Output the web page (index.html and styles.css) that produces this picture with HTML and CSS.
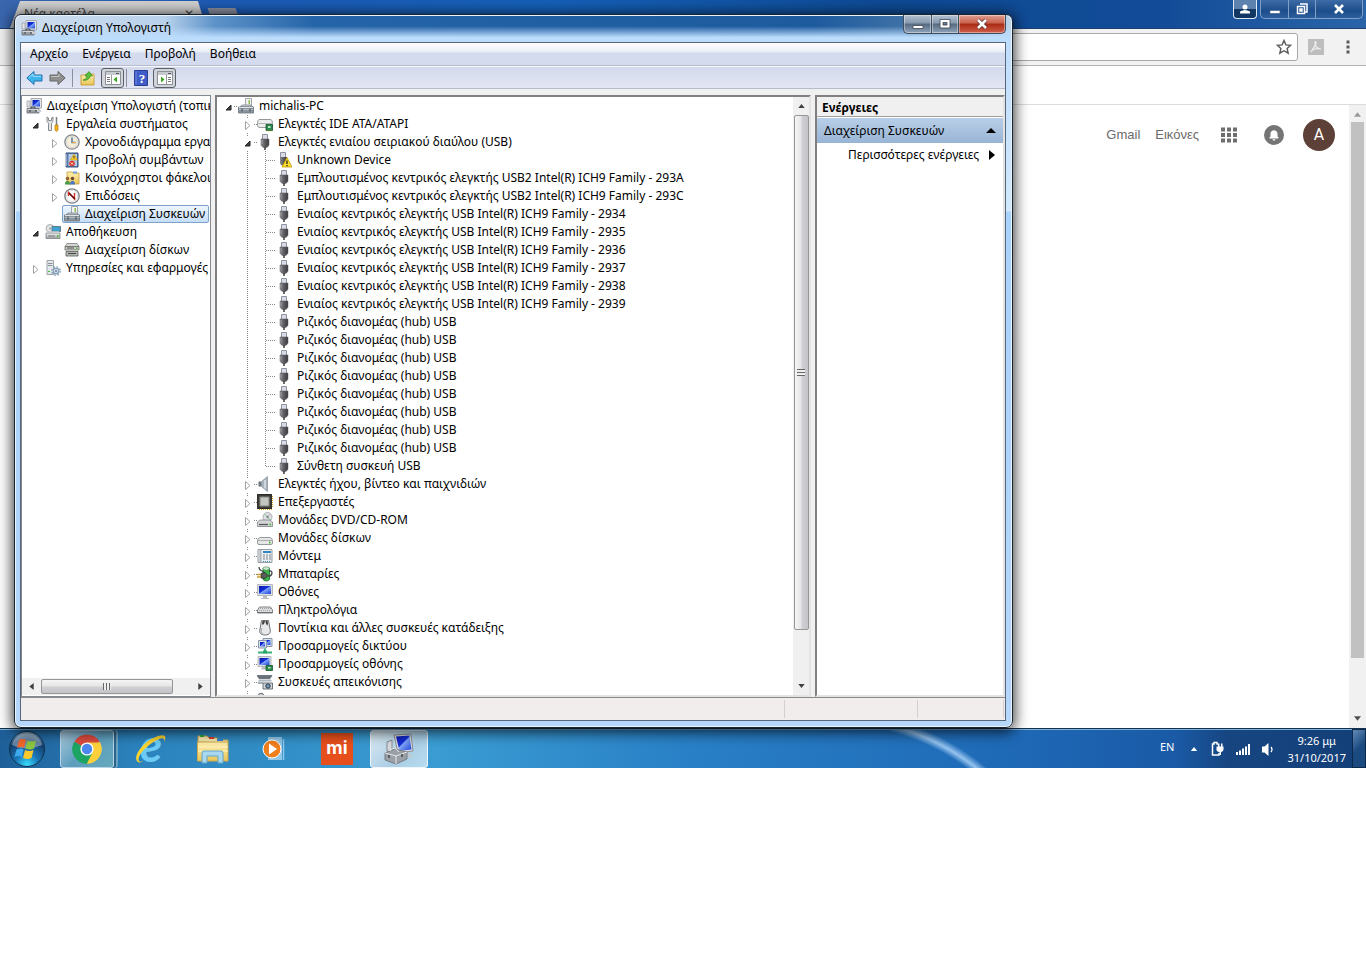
FILE: index.html
```html
<!DOCTYPE html>
<html lang="el">
<head>
  <meta charset="UTF-8" />
  <meta name="viewport" content="width=device-width, initial-scale=1.0" />
  <title>Διαχείριση Υπολογιστή</title>
  <link rel="stylesheet" href="styles.css">
</head>
<body>
  <!-- icon sprite -->
  <svg class="sprite" width="0" height="0" aria-hidden="true">
    <defs>
      <linearGradient id="gBlue" x1="0" y1="0" x2="1" y2="1"><stop offset="0" stop-color="#0a17a8"/><stop offset=".45" stop-color="#1430dc"/><stop offset=".5" stop-color="#7fa4f8"/><stop offset="1" stop-color="#1b3fd6"/></linearGradient>
      <linearGradient id="gGrey" x1="0" y1="0" x2="0" y2="1"><stop offset="0" stop-color="#f4f5f6"/><stop offset="1" stop-color="#9a9ea2"/></linearGradient>
      <linearGradient id="gDark" x1="0" y1="0" x2="1" y2="0"><stop offset="0" stop-color="#8b8b8f"/><stop offset=".5" stop-color="#5c5c60"/><stop offset="1" stop-color="#3c3c40"/></linearGradient>
      <linearGradient id="gGold" x1="0" y1="0" x2="0" y2="1"><stop offset="0" stop-color="#fff0b0"/><stop offset="1" stop-color="#e9c558"/></linearGradient>
      <radialGradient id="gOrb" cx=".5" cy=".95" r=".95"><stop offset="0" stop-color="#37e0ff"/><stop offset=".35" stop-color="#1b77b8"/><stop offset=".75" stop-color="#123d6b"/><stop offset="1" stop-color="#8fb3cd"/></radialGradient>
    </defs>
    <symbol id="i-computer" viewBox="0 0 16 16">
      <path d="M5 .5h10.500v9.500H5z" fill="#e4e6e8" stroke="#a6aaaf"/><path d="M6.500 2h7.500v6.500H6.500z" fill="url(#gBlue)"/>
      <path d="M1 3h3v6H1z" fill="#e2e4e6" stroke="#95999e" stroke-width=".7"/>
      <path d="M1 10.500h12V15H1z" fill="#9aa0a6" stroke="#676d74" stroke-width=".8"/><path d="M5 10.500V9h4v1.500M4 12v2M10 12v2" stroke="#3c4248" fill="none"/><path d="M1.500 11.500h11" stroke="#d4d8db"/>
      <path d="M11 12h4v2h-4z" fill="#c9cdd1"/>
    </symbol>
    <symbol id="i-tools" viewBox="0 0 16 16">
      <path d="M2 1v3.500c0 2 1.500 2 1.500 3V14.500h3V7.500c0-1 1.500-1 1.500-3V1L6.500 2v2.500h-3V2z" fill="#e4e5e7" stroke="#7b7f84" stroke-width=".9"/>
      <path d="M11.500 1v8" stroke="#7b7f84" stroke-width="1.500"/><path d="M10 9h3v5l-1.500 1.500L10 14z" fill="#f3b21c" stroke="#b97a06" stroke-width=".7"/>
    </symbol>
    <symbol id="i-clock" viewBox="0 0 16 16">
      <circle cx="8" cy="8" r="7.200" fill="#f1f1ee" stroke="#85898d" stroke-width="1.300"/><circle cx="8" cy="8" r="5.500" fill="#f6efdc" stroke="#c5c5c0" stroke-width=".6"/>
      <path d="M8 3.500v5h3.500" fill="none" stroke="#4a6c9a" stroke-width="1.400"/><path d="M8 8.500h4" stroke="#e0a54a"/>
    </symbol>
    <symbol id="i-events" viewBox="0 0 16 16">
      <path d="M2 1h12v14H2z" fill="#5779ad" stroke="#35527f"/><path d="M4.500 2H13v12H4.500z" fill="#b9cbe4"/><path d="M1 3h2M1 5h2M1 7h2M1 9h2M1 11h2M1 13h2" stroke="#dfe3e8"/>
      <path d="M10 2l3.500 6h-7z" fill="#ffd42a" stroke="#b98b00" stroke-width=".6"/><path d="M10 4v2.500" stroke="#333"/>
      <circle cx="8" cy="11.500" r="2.800" fill="#d8352a"/><path d="M7 10.500l2 2m0-2l-2 2" stroke="#fff" stroke-width=".9"/>
    </symbol>
    <symbol id="i-shared" viewBox="0 0 16 16">
      <path d="M3 2h5l1 1h6v11H3z" fill="url(#gGold)" stroke="#c79b35" stroke-width=".8"/><path d="M9 1.500h4v2H9z" fill="#6fa4dd"/>
      <circle cx="3.500" cy="8.500" r="1.700" fill="#8f5b30"/><path d="M.8 14.500c0-5 5.400-5 5.400 0z" fill="#4d9b4a"/><circle cx="8.500" cy="8.500" r="1.700" fill="#6b432a"/><path d="M6 14.500c0-5 5-5 5 0z" fill="#4a78c6"/>
    </symbol>
    <symbol id="i-perf" viewBox="0 0 16 16">
      <circle cx="8" cy="8" r="7.200" fill="#fff" stroke="#777b80" stroke-width="1.300"/><circle cx="8" cy="8" r="5.600" fill="#fff" stroke="#c9c9c9" stroke-width=".6"/>
      <path d="M4.500 8V4.500l6 6.500V5" fill="none" stroke="#d52a20" stroke-width="1.400"/><path d="M5 5l6 6" stroke="#5c0d09" stroke-width="1.200"/>
    </symbol>
    <symbol id="i-devices" viewBox="0 0 16 16">
      <path d="M7.500.5h6V8h-6z" fill="#f2f3f4" stroke="#8d9298" stroke-width=".8"/><path d="M10.500 2H12v4h-1.500z" fill="#8fbb4e"/>
      <path d="M2 9l2-2h9l2 2z" fill="#c9ced3" stroke="#737a81" stroke-width=".7"/><path d="M.5 9h15v6H.5z" fill="#8b959e" stroke="#68727b" stroke-width=".8"/><path d="M1 11.500h14" stroke="#b2bac1"/><path d="M4 10.500v3M12 10.500v3" stroke="#3b444c"/><path d="M1 9.500h14" stroke="#dfe4e8"/>
    </symbol>
    <symbol id="i-storage" viewBox="0 0 16 16">
      <circle cx="5" cy="4.500" r="4" fill="#e2e4e5" stroke="#9a9da0" stroke-width=".8"/><circle cx="5" cy="4.500" r="1" fill="#9a9da0"/><path d="M7 2.500h8.500v5H7z" fill="#3ba3d0" stroke="#5c6f7a" stroke-width=".9"/>
      <path d="M1 9h14v5.500H1z" fill="url(#gGrey)" stroke="#7c8083" stroke-width=".8"/><path d="M3 12h7" stroke="#777"/><path d="M12 11h1.500v2H12z" fill="#43c02e"/><path d="M2 8h12" stroke="#c9cccf" stroke-width="1.500"/>
    </symbol>
    <symbol id="i-diskmgmt" viewBox="0 0 16 16">
      <path d="M3 1.500h10l2 3H1z" fill="#d5d7d5" stroke="#7a7d78" stroke-width=".8"/><path d="M1 4.500h14V8H1z" fill="#c8cac6" stroke="#686b66" stroke-width=".8"/><path d="M3 6h7" stroke="#555"/><path d="M12 5.500h1.500V7H12z" fill="#43c02e"/>
      <path d="M2 9.500h12V14H2z" fill="#b4b6b1" stroke="#5b5e58" stroke-width=".8"/><path d="M4 11.500h8" stroke="#444"/>
    </symbol>
    <symbol id="i-services" viewBox="0 0 16 16">
      <path d="M2 .5h6.500v14H2z" fill="#e4e8ea" stroke="#929ca4" stroke-width=".9"/><path d="M3 3.500h4.500M3 5.500h4.500" stroke="#88929a"/><path d="M3 11h2v1H3z" fill="#43c02e"/>
      <circle cx="11" cy="11" r="2.800" fill="#dfe9f2" stroke="#8ba3ba" stroke-width="1.400"/><circle cx="11" cy="11" r="4.200" fill="none" stroke="#8ba3ba" stroke-width="1.400" stroke-dasharray="1.700 1.600"/><circle cx="11" cy="11" r="1" fill="#5b7691"/>
    </symbol>
    <symbol id="i-ide" viewBox="0 0 16 16">
      <path d="M2 3.500h12q1.500 1 1.500 4v3q-1 1-2.500 1H3q-2.500 0-2.500-2v-3q0-2 1.500-3z" fill="#eceeee" stroke="#8b8f91" stroke-width=".9"/><path d="M.5 7.500h15" stroke="#b4b7b8"/>
      <path d="M9 8.500h6.500v6H9z" fill="#2d8a4f" stroke="#15552c" stroke-width=".8"/><path d="M11 10h2.500v2H11z" fill="#bfe5c8"/><path d="M10 14.500v1m2-1v1m2-1v1" stroke="#d9b63c" stroke-width=".8"/>
    </symbol>
    <symbol id="i-usb" viewBox="0 0 16 16">
      <path d="M5.500.5h5v5h-5z" fill="#d9dce6" stroke="#8f93a0"/><path d="M4 5h8v5.500c0 1.500-1.500 2.500-2.500 3h-3C5.500 13 4 12 4 10.500z" fill="url(#gDark)" stroke="#5a5a5e" stroke-width=".5"/><path d="M8 13v3" stroke="#444" stroke-width="1.600"/><path d="M5 6v4" stroke="#aaa" stroke-width=".8"/>
    </symbol>
    <symbol id="i-usbwarn" viewBox="0 0 16 16">
      <path d="M4.500.5h5v5h-5z" fill="#d9dce6" stroke="#8f93a0"/><path d="M4 5h7v5.500c0 1.500-1 2.500-2 3H6C5 13 4 12 4 10.500z" fill="url(#gDark)"/>
      <path d="M11 5.500l5 9.500H6z" fill="#ffde2e" stroke="#c09a00" stroke-width=".8"/><path d="M11 8.500v3.500M11 13v1.200" stroke="#222" stroke-width="1.300"/>
    </symbol>
    <symbol id="i-sound" viewBox="0 0 16 16">
      <path d="M1.500 5.500h3v5h-3z" fill="#6e777f"/><path d="M4.500 5.500L10.500.5v15l-6-5z" fill="#aab4bc" stroke="#8c969e" stroke-width=".8"/><path d="M8 4v8.500" stroke="#e4eaee" stroke-width="1.300"/>
    </symbol>
    <symbol id="i-cpu" viewBox="0 0 16 16">
      <path d="M2 15.300h13M15.300 2v12" stroke="#d9a929" stroke-width="1.400" stroke-dasharray="1 1"/><path d="M.7.7h13.600v13.600H.7z" fill="#45433f" stroke="#2b2a27" stroke-width="1.300"/><path d="M3 3h9v9H3z" fill="#c3c5c2" stroke="#85877f"/>
    </symbol>
    <symbol id="i-dvd" viewBox="0 0 16 16">
      <circle cx="10.500" cy="5" r="4.500" fill="#dfe3e6" stroke="#9b9fa2" stroke-width=".8"/><path d="M10.500 5L7.500 2M10.500 5l3 3" stroke="#74c98b"/><path d="M10.500 5l3-3" stroke="#d790c4"/><circle cx="10.500" cy="5" r="1.200" fill="#888"/>
      <path d="M3 8h10l2.500 2v4.500H.5V10z" fill="#d3d5d6" stroke="#82868a" stroke-width=".8"/><path d="M2 12.500h9" stroke="#555" stroke-width="1.300"/><path d="M12.500 11.500H14v2h-1.500z" fill="#43c02e"/>
    </symbol>
    <symbol id="i-disk" viewBox="0 0 16 16">
      <path d="M3 7.500h10q2.500 1 2.500 3v2.500q0 1.500-1.500 1.500H2q-1.500 0-1.500-1.500v-2.500q0-2 2.500-3z" fill="#e6e7e7" stroke="#8b8f91" stroke-width=".9"/><path d="M1 10.500h14" stroke="#a9acad"/><path d="M12 11.500h1.500v2H12z" fill="#43c02e"/>
    </symbol>
    <symbol id="i-modem" viewBox="0 0 16 16">
      <path d="M1 1.500h14v13H1z" fill="#eceef0" stroke="#8a9198" stroke-width=".9"/><path d="M6 3h8v2H6z" fill="#2f86c1"/><path d="M6 7h8M6 9h8M6 11h8" stroke="#7f8b96" stroke-dasharray="2 1"/><path d="M3.500 2v12" stroke="#aeb5bb" stroke-width="2"/><path d="M6 13.500h8" stroke="#3f9bc4" stroke-dasharray="1 1"/>
    </symbol>
    <symbol id="i-battery" viewBox="0 0 16 16">
      <path d="M6 2h6.500v11c0 2.500-6.500 2.500-6.500 0z" fill="#39b54a" stroke="#1a6b28" stroke-width=".8"/><ellipse cx="9.200" cy="2.500" rx="3.200" ry="1.700" fill="#c7eccb" stroke="#55845b" stroke-width=".6"/>
      <path d="M2 1c0 5 3 2 5 6M12 5c5-1 3 6-1 5" fill="none" stroke="#45494c" stroke-width="1.300"/><path d="M4 7.500l4-1 3 3-3 3-4-.5z" fill="#5b5d58" stroke="#23241f" stroke-width=".7"/><path d="M0 8.500h4M0 11h4" stroke="#c59c2e" stroke-width="1.300"/>
    </symbol>
    <symbol id="i-monitor" viewBox="0 0 16 16">
      <path d="M.5.5h15v11H.5z" fill="#dcdedf" stroke="#b4b8bc"/><path d="M2 2h12v8H2z" fill="url(#gBlue)"/><path d="M6 12h4v2h2v1H4v-1h2z" fill="#babdc0"/>
    </symbol>
    <symbol id="i-keyboard" viewBox="0 0 16 16">
      <path d="M2.500 5h11l2 3v3H.5V8z" fill="#dddfe0" stroke="#74787c" stroke-width=".9"/><path d="M3 6.500h11M2 8.500h12" stroke="#9ea2a6" stroke-dasharray="1 1"/><path d="M.5 10.500h15" stroke="#6c7074"/>
    </symbol>
    <symbol id="i-mouse" viewBox="0 0 16 16">
      <path d="M4.500.5h7L13 9c1 3 0 6-5 6s-6-3-5-6z" fill="#e7e8e9" stroke="#6e7072"/><path d="M5.500 1q-1 3 .5 4l1.500-2L8 1zM8.500 1l.5 3 1.500 1.500Q11.500 3 10.500 1z" fill="#3b3d40"/><path d="M4.500 8q-1 4 1 5.500" fill="none" stroke="#a4a6a8"/>
    </symbol>
    <symbol id="i-network" viewBox="0 0 16 16">
      <path d="M6 .5h9v8H6z" fill="#dbe2ec" stroke="#8796ab"/><path d="M7.500 2h6v5h-6z" fill="url(#gBlue)"/><path d="M1.500 2.500h8v7.500h-8z" fill="#dbe2ec" stroke="#8796ab"/><path d="M3 4h5v4.500H3z" fill="url(#gBlue)"/>
      <path d="M8 10.500V14M1 14.500h14" stroke="#36b37a" stroke-width="1.800"/><path d="M6 12.500h4v3H6z" fill="#2aa56b"/>
    </symbol>
    <symbol id="i-display" viewBox="0 0 16 16">
      <path d="M1 .5h13v10H1z" fill="#dcdedf" stroke="#b4b8bc"/><path d="M2.500 2h10v7h-10z" fill="url(#gBlue)"/><path d="M5 11h5v2.500H4z" fill="#babdc0"/><path d="M9 9.500h6.500v5H9z" fill="#2d8a4f" stroke="#15552c" stroke-width=".8"/><path d="M11 11h2.500v1.500H11z" fill="#bfe5c8"/>
    </symbol>
    <symbol id="i-imaging" viewBox="0 0 16 16">
      <path d="M0 1.500h15l-2 3H2z" fill="#66737d" stroke="#444e56" stroke-width=".6"/><path d="M2 5.500h12l1 2H1z" fill="#aeb8c0"/>
      <path d="M6 9h9.500v6H6z" fill="#ced5da" stroke="#5e6870" stroke-width=".9"/><circle cx="11" cy="12" r="2.200" fill="#6f9cc4" stroke="#333"/><path d="M1 9h5" stroke="#89949c" stroke-width="1.500"/>
    </symbol>
    <symbol id="i-portable" viewBox="0 0 16 16"><circle cx="4" cy="4" r="2.800" fill="#c9ccd0" stroke="#6b6f73"/><circle cx="4" cy="4" r="1" fill="#555"/></symbol>
    <symbol id="a-open" viewBox="0 0 9 9"><path d="M7 2v5H2z" fill="#404040" stroke="#262626"/></symbol>
    <symbol id="a-closed" viewBox="0 0 9 9"><path d="M2.500.5v8l4.500-4z" fill="#fff" stroke="#a2a2a2"/></symbol>
    <symbol id="t-up" viewBox="0 0 8 5"><path d="M4 0l4 5H0z" fill="currentColor"/></symbol>
  </svg>

  <div class="desktop">

    <!-- browser behind -->
    <section class="browser">
      <header class="browser-title">
        <div class="tab"><span>Νέα καρτέλα</span><span>✕</span></div>
        <div class="newtab"></div>
        <div class="win-buttons glass">
          <button class="user" aria-label="Χρήστης"><svg width="12" height="12" viewBox="0 0 12 12"><circle cx="6" cy="4" r="2.500" fill="#fff"/><path d="M1 10.500V8.500q5-3 10 0v2z" fill="#fff"/></svg></button>
          <button class="min" aria-label="Ελαχιστοποίηση"><svg width="12" height="12" viewBox="0 0 12 12"><path d="M1 7.500h10v3H1z" fill="#fff" stroke="#46658c" stroke-width=".7"/></svg></button>
          <button class="max" aria-label="Επαναφορά"><svg width="12" height="12" viewBox="0 0 12 12"><path d="M4 1h7v8H9M1.500 3.500h7v7h-7zM4 6h2v2H4z" fill="none" stroke="#fff" stroke-width="1.500"/></svg></button>
          <button class="close" aria-label="Κλείσιμο"><svg width="12" height="12" viewBox="0 0 12 12"><path d="M2 2l8 8M10 2l-8 8" stroke="#fff" stroke-width="2.600"/></svg></button>
        </div>
      </header>
      <div class="browser-toolbar">
        <div class="omnibox">
          <svg width="16" height="16" viewBox="0 0 16 16"><path d="M8 1.500l1.900 4.400 4.800.4-3.600 3.200 1.100 4.700L8 11.700l-4.200 2.500 1.100-4.700L1.300 6.300l4.800-.4z" fill="none" stroke="#5a5a5a" stroke-width="1.400"/></svg>
        </div>
        <svg width="16" height="16" viewBox="0 0 16 16"><path d="M0 0h16v16H0z" fill="#bdbdbd"/><path d="M7 3c3-1 0 4-4 10 1-3 6-4 10-3-4 0-7-4-6-7z" fill="none" stroke="#eee" stroke-width="1.200"/></svg>
        <svg class="dots" width="4" height="16" viewBox="0 0 4 16"><path d="M.5 1.500h3v3h-3zM.5 6.500h3v3h-3zM.5 11.500h3v3h-3z" fill="#5a5a5a"/></svg>
      </div>
      <div class="bookmarks"></div>
      <div class="browser-page">
        <nav class="google-bar">
          <a href="#">Gmail</a>
          <a href="#">Εικόνες</a>
          <svg class="apps" width="16" height="16" viewBox="0 0 16 16"><path d="M0 2.500h16M0 8h16M0 13.500h16" stroke="#6e6e6e" stroke-width="4" stroke-dasharray="4 2"/></svg>
          <svg class="bell" width="20" height="20" viewBox="0 0 20 20"><circle cx="10" cy="10" r="10" fill="#757575"/><path d="M5.500 13.500v-1l1-1V9c0-5 7-5 7 0v2.500l1 1v1zM8.500 14.300h3c0 1.800-3 1.800-3 0z" fill="#fff"/></svg>
          <span class="avatar">A</span>
        </nav>
        <div class="page-scroll">
          <svg width="7" height="5"><use href="#t-up"/></svg>
          <div class="page-thumb"></div>
          <svg class="down" width="7" height="5"><use href="#t-up"/></svg>
        </div>
      </div>
    </section>

    <!-- computer management window -->
    <section class="window">
      <header class="window-title">
        <svg width="16" height="16"><use href="#i-computer"/></svg>
        <h1>Διαχείριση Υπολογιστή</h1>
        <div class="win-buttons">
          <button class="min" aria-label="Ελαχιστοποίηση"><svg width="12" height="12" viewBox="0 0 12 12"><path d="M1 7.500h10v3H1z" fill="#fff" stroke="#3a4656" stroke-width=".8"/></svg></button>
          <button class="max" aria-label="Μεγιστοποίηση"><svg width="12" height="12" viewBox="0 0 12 12"><path d="M1 1.500h10v8.500H1zM4 4.500h4V7H4z" fill="#fff" fill-rule="evenodd" stroke="#3a4656" stroke-width=".8"/></svg></button>
          <button class="close red" aria-label="Κλείσιμο"><svg width="12" height="12" viewBox="0 0 12 12"><path d="M2 2l8 8M10 2l-8 8" stroke="#5b2a2a" stroke-width="4"/><path d="M2 2l8 8M10 2l-8 8" stroke="#fff" stroke-width="2.600"/></svg></button>
        </div>
      </header>

      <div class="client">
        <nav class="menubar">
          <button>Αρχείο</button>
          <button>Ενέργεια</button>
          <button>Προβολή</button>
          <button>Βοήθεια</button>
        </nav>
        <div class="toolbar">
          <button aria-label="Πίσω"><svg width="17" height="16" viewBox="0 0 17 16"><path d="M8 1.500V5h8v6H8v3.500L.8 8z" fill="#3fb4ec" stroke="#1e72ae"/><path d="M3 7.500l4-3.500v2.300h8" fill="none" stroke="#a8e2fb"/></svg></button>
          <button aria-label="Εμπρός"><svg width="17" height="16" viewBox="0 0 17 16"><path d="M9 1.500V5H1v6h8v3.500L16.200 8z" fill="#8f8f8f" stroke="#666"/><path d="M2 6.500h8V4" fill="none" stroke="#c4c4c4"/></svg></button>
          <i class="sep"></i>
          <button aria-label="Επάνω"><svg width="16" height="16" viewBox="0 0 16 16"><path d="M1 5h4l1-1h8v11H1z" fill="url(#gGold)" stroke="#c79b35" stroke-width=".9"/><path d="M3 10c1 0 4-1 4-4H5l4-4.500L12.500 6H10c0 3-4 5-7 4z" fill="#59c23c" stroke="#2c8a1d" stroke-width=".7"/></svg></button>
          <button class="pressed" aria-label="Δέντρο κονσόλας"><svg width="16" height="14" viewBox="0 0 16 14"><path d="M.5.5h15v13H.5z" fill="#fff" stroke="#8b8f96"/><path d="M1 1h14v3H1z" fill="#c5c9d0"/><path d="M11 2.500h3" stroke="#555"/><path d="M6.500 4v9" stroke="#999"/><path d="M2 6.500h3M2 8.500h3M2 10.500h3" stroke="#777"/><path d="M12 5.500v6L8.500 8.500z" fill="#39a51f"/></svg></button>
          <i class="sep"></i>
          <button aria-label="Βοήθεια"><svg width="14" height="16" viewBox="0 0 14 16"><path d="M.5.5h13v15H.5z" fill="#3f5cc8" stroke="#2a3f94"/><path d="M2 1v14" stroke="#7189dd"/><text x="8" y="13" text-anchor="middle" class="help-mark">?</text></svg></button>
          <button class="pressed" aria-label="Παράθυρο ενεργειών"><svg width="16" height="14" viewBox="0 0 16 14"><path d="M.5.5h15v13H.5z" fill="#fff" stroke="#8b8f96"/><path d="M1 1h14v3H1z" fill="#c5c9d0"/><path d="M11 2.500h3" stroke="#555"/><path d="M9.500 4v9" stroke="#999"/><path d="M11 6.500h3M11 8.500h3M11 10.500h3" stroke="#777"/><path d="M4 5.500v6l3.500-3z" fill="#39a51f"/></svg></button>
        </div>

        <div class="panes">
          <aside class="pane side">
            <ul class="tree">
              <li class="row l0"><svg class="ico"><use href="#i-computer"/></svg><span>Διαχείριση Υπολογιστή (τοπικός)</span></li>
              <li class="row l1"><svg class="arr"><use href="#a-open"/></svg><svg class="ico"><use href="#i-tools"/></svg><span>Εργαλεία συστήματος</span></li>
              <li class="row l2"><svg class="arr"><use href="#a-closed"/></svg><svg class="ico"><use href="#i-clock"/></svg><span>Χρονοδιάγραμμα εργασιών</span></li>
              <li class="row l2"><svg class="arr"><use href="#a-closed"/></svg><svg class="ico"><use href="#i-events"/></svg><span>Προβολή συμβάντων</span></li>
              <li class="row l2"><svg class="arr"><use href="#a-closed"/></svg><svg class="ico"><use href="#i-shared"/></svg><span>Κοινόχρηστοι φάκελοι</span></li>
              <li class="row l2"><svg class="arr"><use href="#a-closed"/></svg><svg class="ico"><use href="#i-perf"/></svg><span>Επιδόσεις</span></li>
              <li class="row l2"><svg class="arr"></svg><div class="selected"><svg class="ico"><use href="#i-devices"/></svg><span>Διαχείριση Συσκευών</span></div></li>
              <li class="row l1"><svg class="arr"><use href="#a-open"/></svg><svg class="ico"><use href="#i-storage"/></svg><span>Αποθήκευση</span></li>
              <li class="row l2"><svg class="arr"></svg><svg class="ico"><use href="#i-diskmgmt"/></svg><span>Διαχείριση δίσκων</span></li>
              <li class="row l1"><svg class="arr"><use href="#a-closed"/></svg><svg class="ico"><use href="#i-services"/></svg><span>Υπηρεσίες και εφαρμογές</span></li>
            </ul>
            <div class="hscroll">
              <svg class="left" width="7" height="5"><use href="#t-up"/></svg>
              <div class="hthumb"><i class="grip"></i></div>
              <svg class="right" width="7" height="5"><use href="#t-up"/></svg>
            </div>
          </aside>

          <main class="pane devices">
            <ul class="tree">
              <li class="row d0"><svg class="arr"><use href="#a-open"/></svg><svg class="ico"><use href="#i-devices"/></svg><span>michalis-PC</span></li>
              <li class="row d1"><svg class="arr"><use href="#a-closed"/></svg><svg class="ico"><use href="#i-ide"/></svg><span>Ελεγκτές IDE ATA/ATAPI</span></li>
              <li class="row d1"><svg class="arr"><use href="#a-open"/></svg><svg class="ico"><use href="#i-usb"/></svg><span>Ελεγκτές ενιαίου σειριακού διαύλου (USB)</span></li>
              <li class="row d2"><svg class="ico"><use href="#i-usbwarn"/></svg><span>Unknown Device</span></li>
              <li class="row d2"><svg class="ico"><use href="#i-usb"/></svg><span>Εμπλουτισμένος κεντρικός ελεγκτής USB2 Intel(R) ICH9 Family - 293A</span></li>
              <li class="row d2"><svg class="ico"><use href="#i-usb"/></svg><span>Εμπλουτισμένος κεντρικός ελεγκτής USB2 Intel(R) ICH9 Family - 293C</span></li>
              <li class="row d2"><svg class="ico"><use href="#i-usb"/></svg><span>Ενιαίος κεντρικός ελεγκτής USB Intel(R) ICH9 Family - 2934</span></li>
              <li class="row d2"><svg class="ico"><use href="#i-usb"/></svg><span>Ενιαίος κεντρικός ελεγκτής USB Intel(R) ICH9 Family - 2935</span></li>
              <li class="row d2"><svg class="ico"><use href="#i-usb"/></svg><span>Ενιαίος κεντρικός ελεγκτής USB Intel(R) ICH9 Family - 2936</span></li>
              <li class="row d2"><svg class="ico"><use href="#i-usb"/></svg><span>Ενιαίος κεντρικός ελεγκτής USB Intel(R) ICH9 Family - 2937</span></li>
              <li class="row d2"><svg class="ico"><use href="#i-usb"/></svg><span>Ενιαίος κεντρικός ελεγκτής USB Intel(R) ICH9 Family - 2938</span></li>
              <li class="row d2"><svg class="ico"><use href="#i-usb"/></svg><span>Ενιαίος κεντρικός ελεγκτής USB Intel(R) ICH9 Family - 2939</span></li>
              <li class="row d2"><svg class="ico"><use href="#i-usb"/></svg><span>Ριζικός διανομέας (hub) USB</span></li>
              <li class="row d2"><svg class="ico"><use href="#i-usb"/></svg><span>Ριζικός διανομέας (hub) USB</span></li>
              <li class="row d2"><svg class="ico"><use href="#i-usb"/></svg><span>Ριζικός διανομέας (hub) USB</span></li>
              <li class="row d2"><svg class="ico"><use href="#i-usb"/></svg><span>Ριζικός διανομέας (hub) USB</span></li>
              <li class="row d2"><svg class="ico"><use href="#i-usb"/></svg><span>Ριζικός διανομέας (hub) USB</span></li>
              <li class="row d2"><svg class="ico"><use href="#i-usb"/></svg><span>Ριζικός διανομέας (hub) USB</span></li>
              <li class="row d2"><svg class="ico"><use href="#i-usb"/></svg><span>Ριζικός διανομέας (hub) USB</span></li>
              <li class="row d2"><svg class="ico"><use href="#i-usb"/></svg><span>Ριζικός διανομέας (hub) USB</span></li>
              <li class="row d2 last"><svg class="ico"><use href="#i-usb"/></svg><span>Σύνθετη συσκευή USB</span></li>
              <li class="row d1"><svg class="arr"><use href="#a-closed"/></svg><svg class="ico"><use href="#i-sound"/></svg><span>Ελεγκτές ήχου, βίντεο και παιχνιδιών</span></li>
              <li class="row d1"><svg class="arr"><use href="#a-closed"/></svg><svg class="ico"><use href="#i-cpu"/></svg><span>Επεξεργαστές</span></li>
              <li class="row d1"><svg class="arr"><use href="#a-closed"/></svg><svg class="ico"><use href="#i-dvd"/></svg><span>Μονάδες DVD/CD-ROM</span></li>
              <li class="row d1"><svg class="arr"><use href="#a-closed"/></svg><svg class="ico"><use href="#i-disk"/></svg><span>Μονάδες δίσκων</span></li>
              <li class="row d1"><svg class="arr"><use href="#a-closed"/></svg><svg class="ico"><use href="#i-modem"/></svg><span>Μόντεμ</span></li>
              <li class="row d1"><svg class="arr"><use href="#a-closed"/></svg><svg class="ico"><use href="#i-battery"/></svg><span>Μπαταρίες</span></li>
              <li class="row d1"><svg class="arr"><use href="#a-closed"/></svg><svg class="ico"><use href="#i-monitor"/></svg><span>Οθόνες</span></li>
              <li class="row d1"><svg class="arr"><use href="#a-closed"/></svg><svg class="ico"><use href="#i-keyboard"/></svg><span>Πληκτρολόγια</span></li>
              <li class="row d1"><svg class="arr"><use href="#a-closed"/></svg><svg class="ico"><use href="#i-mouse"/></svg><span>Ποντίκια και άλλες συσκευές κατάδειξης</span></li>
              <li class="row d1"><svg class="arr"><use href="#a-closed"/></svg><svg class="ico"><use href="#i-network"/></svg><span>Προσαρμογείς δικτύου</span></li>
              <li class="row d1"><svg class="arr"><use href="#a-closed"/></svg><svg class="ico"><use href="#i-display"/></svg><span>Προσαρμογείς οθόνης</span></li>
              <li class="row d1"><svg class="arr"><use href="#a-closed"/></svg><svg class="ico"><use href="#i-imaging"/></svg><span>Συσκευές απεικόνισης</span></li>
              <li class="row d1"><svg class="arr"></svg><svg class="ico"><use href="#i-portable"/></svg></li>
            </ul>
            <div class="vscroll">
              <svg width="7" height="4"><use href="#t-up"/></svg>
              <div class="vthumb"><i class="grip"></i></div>
              <svg class="down" width="7" height="4"><use href="#t-up"/></svg>
            </div>
          </main>

          <aside class="pane actions">
            <h2>Ενέργειες</h2>
            <button class="group">Διαχείριση Συσκευών<svg width="10" height="5" viewBox="0 0 10 5"><path d="M5 0l5 5H0z"/></svg></button>
            <button class="more">Περισσότερες ενέργειες<svg width="6" height="10" viewBox="0 0 6 10"><path d="M0 0l6 5-6 5z"/></svg></button>
          </aside>
        </div>
        <footer class="statusbar"><i></i><i></i><i></i></footer>
      </div>
    </section>
  </div>

  <footer class="taskbar">
    <button class="start" aria-label="Έναρξη">
      <svg width="38" height="38" viewBox="0 0 38 38"><circle cx="19" cy="19" r="17.500" fill="url(#gOrb)" stroke="#12304a"/><path d="M4 15a15.500 15.500 0 0 1 30 0q-15 7-30 0z" fill="#fff" opacity=".35"/>
        <path d="M11 10q4-2 7 0l-2 8q-3-2-7 0z" fill="#f0652a"/><path d="M19.500 10.500q4 2 8.500 0l-2 8q-4 2-8.500 0z" fill="#8cc63e"/><path d="M8.500 19.500q4-2 7 0l-2 7.500q-3-2-7 0z" fill="#3fa9f0"/><path d="M17 20q4 2 8.500 0l-2 8q-4 2-8.500 0z" fill="#fcc92c"/></svg>
    </button>
    <button class="task stacked" aria-label="Chrome">
      <svg width="30" height="30" viewBox="0 0 30 30"><path d="M15 15L2.400 7.700A14.500 14.500 0 0 1 27.600 7.700z" fill="#dd4b3e"/><path d="M15 15L27.600 7.700A14.500 14.500 0 0 1 15 29.500z" fill="#fdd03b"/><path d="M15 15v14.500A14.500 14.500 0 0 1 2.400 7.700z" fill="#1da462"/><path d="M15 8.500h13a14.500 14.500 0 0 1-13 21l5.600-11.200z" fill="#fdd03b"/><path d="M2.400 7.700l7 11 11.200-.4L15 29.500A14.500 14.500 0 0 1 2.400 7.700z" fill="#1da462"/><circle cx="15" cy="15" r="6.600" fill="#fff"/><circle cx="15" cy="15" r="5.200" fill="#4a87ee"/></svg>
    </button>
    <button class="task" aria-label="Internet Explorer">
      <svg width="34" height="34" viewBox="0 0 34 34"><text x="17" y="30" text-anchor="middle" class="ie">e</text><path d="M3 29C-1 24 9 9 24 4c7-2 9 0 6 6 1-4-1-5-6-2.500C14 12 2 24 5 29c1 1 3 1 6-1-4 3-7 3-8 1z" fill="#fcd32f"/></svg>
    </button>
    <button class="task" aria-label="Εξερεύνηση">
      <svg width="34" height="32" viewBox="0 0 34 32"><path d="M2 9V3h9l2 2h8l1 2h10v3z" fill="#f8eab2" stroke="#c9a94e"/><path d="M4 2h4v2H4z" fill="#2fae3a"/><path d="M13 4h5v2h-5z" fill="#d9382c"/><path d="M21 6h6v2h-6z" fill="#3a82d8"/><path d="M1.500 9H32v19H1.500z" fill="url(#gGold)" stroke="#cfa94d"/><path d="M2 14h30M2 18h30" stroke="#fff4c8"/><path d="M6 30V20q0-2 2-2h17q2 0 2 2v10h-5v-7H11v7z" fill="#a8d7ee" stroke="#5fa6cc"/></svg>
    </button>
    <button class="task" aria-label="Media Player">
      <svg width="30" height="26" viewBox="0 0 30 26"><path d="M8 1h14v23H8z" fill="#bfe0f4" opacity=".7"/><path d="M20.500 2v22M23.500 3v21" stroke="#8cc7ec" stroke-width="1.500"/><circle cx="12" cy="13" r="9" fill="#f07f1e" stroke="#fff"/><path d="M9 7.500v11l8-5.500z" fill="#fff"/></svg>
    </button>
    <button class="task" aria-label="Mi"><span class="mi">mi</span></button>
    <button class="task active" aria-label="Διαχείριση Υπολογιστή">
      <svg width="32" height="32" viewBox="0 0 32 32"><path d="M11 2l17-1 2 17-15 2z" fill="#dcdde0" stroke="#8b8f96"/><path d="M13 3.500l13.500-1 2 14-12 1.500z" fill="url(#gBlue)"/><path d="M4 9l5-2v12l-5-1z" fill="#d5d8dc" stroke="#868a90"/><path d="M18 20h8l4 4H17z" fill="#c5c8cc"/><path d="M2 20l10-4 12 3v7l-11 5-11-4z" fill="#9aa0a6" stroke="#777d83"/><path d="M2 20l11 3 11-4M13 23v8M7 18q4-6 9 1" fill="none" stroke="#e6e9ec"/><path d="M6 22v3M19 21v3" stroke="#43484d" stroke-width="1.500"/></svg>
    </button>
    <div class="tray">
      <span class="lang">EN</span>
      <svg class="up" width="8" height="4"><use href="#t-up"/></svg>
      <svg width="16" height="16" viewBox="0 0 16 16"><path d="M6 14H2.500V3H4V1.500h3V3h1M6 14h3v-2" fill="none" stroke="#fff" stroke-width="1.500"/><path d="M6.500 5.500h7v3q0 2-2.500 2.500v3H9.500v-3Q6.500 10.500 6.500 8.500zM8 2.500h1.500v3H8zM11 2.500h1.500v3H11z" fill="#fff"/></svg>
      <svg width="16" height="16" viewBox="0 0 16 16"><path d="M1 11h2v3H1zM4 9.500h2V14H4zM7 7.500h2V14H7zM10 5.500h2V14h-2zM13 3h2v11h-2z" fill="#fff"/></svg>
      <svg width="16" height="16" viewBox="0 0 16 16"><path d="M2 5.500h2.500L8.500 2v13l-4-3.500H2z" fill="#fff"/><path d="M11 6q2 2.500 0 5" fill="none" stroke="#fff" stroke-width="1.300"/></svg>
      <div class="time"><span>9:26 μμ</span><span>31/10/2017</span></div>
      <button class="peek" aria-label="Εμφάνιση επιφάνειας εργασίας"></button>
    </div>
  </footer>
</body>
</html>
```
FILE: styles.css
```css
* {
  box-sizing: border-box;
}
body {
  margin: 0;
  background: #fff;
  color: #000;
  font-family: "Noto Sans", "Open Sans", sans-serif;
  font-size: 12px;
  line-height: 18px;
}
h1, h2, ul {
  margin: 0;
  padding: 0;
  font-size: 12px;
  font-weight: normal;
  list-style: none;
}
button {
  margin: 0;
  padding: 0;
  border: 0;
  background: none;
  color: inherit;
  font: inherit;
}
svg {
  display: block;
  flex: none;
}
.sprite {
  position: absolute;
}

/* browser and window share one grid cell, the window is on top */
.desktop {
  display: grid;
}
.browser, .window {
  grid-area: 1 / 1;
  min-width: 0;
}

/* browser */
.browser {
  display: flex;
  flex-direction: column;
}
.browser-title {
  display: flex;
  height: 29px;
  background: linear-gradient(90deg, #3a66ae, #1c5ab4 16%, #1560b8 40%, #0e4a94 65%, #124c98 85%, #2a64a8);
  border-bottom: 1px solid #1b3f70;
}
.tab {
  display: flex;
  justify-content: space-between;
  width: 196px;
  margin: 1px 0 0 10px;
  padding: 4px 12px 0 14px;
  background: #d0d0d0;
  clip-path: polygon(10px 0, 188px 0, 100% 100%, 0 100%);
  color: #444;
}
.newtab {
  width: 28px;
  height: 14px;
  margin: 8px 0 0 4px;
  background: #8a8fa0;
  transform: skewX(20deg);
}
.win-buttons {
  display: flex;
  margin-left: auto;
}
.win-buttons button {
  display: flex;
  align-items: center;
  justify-content: center;
  height: 19px;
  border: 1px solid #3d4d60;
  border-top: 0;
  border-right-width: 0;
  background: linear-gradient(#b4c2d2 0, #8799ae 45%, #56697f 50%, #8fa5bb);
  box-shadow: inset 0 0 0 1px rgba(255, 255, 255, .4);
}
.win-buttons .min {
  width: 28px;
  border-radius: 0 0 0 5px;
}
.win-buttons .max {
  width: 27px;
}
.win-buttons .close {
  width: 48px;
  border-right-width: 1px;
  border-radius: 0 0 5px 0;
}
.win-buttons .red {
  background: linear-gradient(#e0a090 0, #c8604c 45%, #a82a14 50%, #d0604a);
}
.glass {
  margin-right: 3px;
}
.win-buttons.glass button {
  border-color: #7f9fc6;
  background: linear-gradient(#3c6ba6, #1d4d8b 60%, #2c5f9e);
  box-shadow: none;
}
.win-buttons.glass .user {
  width: 24px;
  margin-right: 3px;
  border: 1px solid #dce8f4;
  border-top: 0;
  border-radius: 0 0 4px 4px;
  background: linear-gradient(#5d82ad 50%, #123763 50%);
}
.browser-toolbar {
  display: flex;
  align-items: center;
  gap: 10px;
  height: 37px;
  padding: 0 16px 0 14px;
  background: #f2f2f2;
  border-bottom: 1px solid #b6b4b6;
}
.omnibox {
  display: flex;
  flex: 1;
  align-items: center;
  justify-content: flex-end;
  height: 28px;
  padding-right: 5px;
  background: #fff;
  border: 1px solid #a8a8a8;
  border-radius: 3px;
}
.dots {
  margin-left: 12px;
}
.bookmarks {
  height: 39px;
  border-bottom: 1px solid #dcdcdc;
}
.browser-page {
  display: flex;
  flex: 1;
  align-items: stretch;
}
.google-bar {
  display: flex;
  flex: 1;
  align-items: center;
  justify-content: flex-end;
  height: 60px;
  padding-right: 14px;
  font-family: "Liberation Sans", Arial, sans-serif;
  font-size: 13px;
}
.google-bar a {
  margin-left: 15px;
  color: #6a6a6a;
  text-decoration: none;
}
.apps {
  margin-left: 22px;
}
.bell {
  margin-left: 27px;
}
.avatar {
  width: 32px;
  height: 32px;
  margin-left: 19px;
  border-radius: 50%;
  background: #5d4037;
  color: #fff;
  font-family: Roboto, sans-serif;
  font-size: 16px;
  line-height: 32px;
  text-align: center;
}
.page-scroll {
  display: flex;
  flex-direction: column;
  align-items: center;
  width: 17px;
  padding: 7px 0;
  background: #f1f1f1;
  color: #999;
}
.page-thumb {
  flex: none;
  width: 13px;
  height: 88%;
  margin-top: 5px;
  background: #c1c1c1;
}
.page-scroll .down {
  margin-top: auto;
  color: #505050;
}
.down {
  transform: rotate(180deg);
}

/* window frame */
.window {
  z-index: 1;
  margin: 14px 353px 0 14px;
  padding: 0 6px 6px 5px;
  border: 1px solid #1a242e;
  border-radius: 7px;
  background: linear-gradient(transparent 40%, #bcdcfc 80%) 0 0 / 100% 28px no-repeat, linear-gradient(90deg, #cfdeee, #b9d2ec 15%, #5e93c9 20%, #2564a8 30%, #1d5a9e 80%, #4878a8 92%, #c0d6ec) 0 0 / 100% 28px no-repeat, linear-gradient(#bcdcfc, #d2e8fc 196px, #a9d2fc 197px, #b6d6fa);
  box-shadow: inset 0 0 0 1px #e8f4fe, 0 2px 14px 2px rgba(0, 0, 0, .75);
}
.window-title {
  display: flex;
  gap: 5px;
  height: 27px;
  padding-left: 1px;
}
.window-title > svg {
  margin-top: 5px;
}
.window-title h1 {
  margin-top: 4px;
}
.client {
  border: 1px solid #56677c;
  background: #f0f0f0;
}

/* menu and toolbar */
.menubar {
  display: flex;
  gap: 14px;
  height: 23px;
  padding: 0 9px;
  border-bottom: 1px solid #b6bccc;
  background: linear-gradient(#fff, #e9edf6 9px, #d5dbee 10px, #d5dbee);
}
.toolbar {
  display: flex;
  align-items: center;
  gap: 6px;
  height: 23px;
  padding-left: 5px;
  border-top: 1px solid #f8f8fc;
  border-bottom: 1px solid #b6bccc;
  background: linear-gradient(#d3d9ec, #e2e6f4);
}
.toolbar .pressed {
  display: grid;
  place-items: center;
  width: 23px;
  height: 20px;
  margin-left: -1px;
  border: 1px solid #5c6068;
  border-radius: 3px;
  background: #d2d4dc;
}
.sep {
  width: 1px;
  height: 18px;
  background: #8c909c;
}
.toolbar .sep + button {
  margin-left: 1px;
}
.toolbar .pressed + .sep {
  margin-left: -4px;
}
.help-mark {
  fill: #fff;
  font: bold 13px "Liberation Serif", serif;
}

/* panes */
.panes {
  display: grid;
  grid-template-columns: 190px 1fr 190px;
  gap: 4px;
  height: 608px;
  padding-top: 6px;
}
.pane {
  display: flex;
  min-width: 0;
  overflow: hidden;
  border: 2px solid #696969;
  border-color: #808080 #e3e3e3 #e3e3e3 #808080;
  background: #fff;
}
.side {
  flex-direction: column;
  padding-bottom: 1px;
  border-width: 1px;
  border-color: #828790;
}
.tree {
  flex: 1;
  min-width: 0;
  overflow: hidden;
}
.side .tree {
  padding: 1px 0 0 4px;
}
.row {
  display: flex;
  align-items: center;
  height: 18px;
  white-space: nowrap;
}
.row span {
  margin-left: 5px;
}
.ico {
  width: 16px;
  height: 16px;
}
.arr {
  width: 9px;
  height: 9px;
  margin: 2px 5px 0;
}
.l2 {
  padding-left: 19px;
}
.selected {
  display: flex;
  height: 18px;
  margin-left: -2px;
  padding: 0 3px 0 1px;
  border: 1px solid #7da2ce;
  border-radius: 2px;
  background: linear-gradient(#eef5fd, #c6ddf8);
  line-height: 16px;
}
.devices .tree {
  padding-left: 2px;
}
/* dotted connector lines of the device tree */
.d0, .d1, .d2 {
  background-repeat: no-repeat;
}
.d0 {
  background-image: repeating-linear-gradient(90deg, #888 0 1px, transparent 1px 2px);
  background-size: 4px 1px;
  background-position: 15px 9px;
}
.d1 {
  padding-left: 19px;
  background-image: repeating-linear-gradient(#888 0 1px, transparent 1px 2px), repeating-linear-gradient(90deg, #888 0 1px, transparent 1px 2px);
  background-size: 1px 3px, 4px 1px;
  background-position: 28px 0, 35px 9px;
}
.d2 {
  padding-left: 57px;
  background-image: repeating-linear-gradient(#888 0 1px, transparent 1px 2px), repeating-linear-gradient(#888 0 1px, transparent 1px 2px), repeating-linear-gradient(90deg, #888 0 1px, transparent 1px 2px);
  background-size: 1px 18px, 1px 18px, 10px 1px;
  background-position: 28px 0, 46px 0, 47px 9px;
}
.last {
  background-size: 1px 18px, 1px 10px, 10px 1px;
}

/* window scrollbars */
.hscroll {
  display: flex;
  align-items: center;
  justify-content: space-between;
  height: 17px;
  padding: 0 6px;
  background: #f0f0f0;
  color: #404040;
}
.hthumb {
  display: grid;
  place-items: center;
  width: 132px;
  height: 15px;
  margin-right: 18px;
  border: 1px solid #979797;
  border-radius: 2px;
  background: linear-gradient(#f5f5f5, #e6e6e6 45%, #d0d0d4 55%, #c4c4c8);
}
.grip {
  width: 8px;
  height: 7px;
  background: repeating-linear-gradient(90deg, #666 0 1px, #eee 1px 3px);
}
.left {
  transform: rotate(-90deg);
}
.right {
  transform: rotate(90deg);
}
.vscroll {
  display: flex;
  flex-direction: column;
  align-items: center;
  width: 16px;
  padding: 7px 0;
  background: #f0f0f0;
  color: #404040;
}
.vthumb {
  display: grid;
  place-items: center;
  width: 15px;
  height: 515px;
  margin-top: 7px;
  border: 1px solid #979797;
  border-radius: 2px;
  background: linear-gradient(90deg, #f5f5f5, #e6e6e6 45%, #d0d0d4 55%, #c4c4c8);
}
.vthumb .grip {
  background: repeating-linear-gradient(#666 0 1px, #eee 1px 3px);
}
.vscroll .down {
  margin-top: auto;
}

/* actions */
.actions {
  flex-direction: column;
}
.actions h2 {
  height: 20px;
  padding-left: 5px;
  border-bottom: 1px solid #a0a0a0;
  background: #f0f0f0;
  font-weight: bold;
  line-height: 21px;
}
.actions button {
  display: flex;
  align-items: center;
  justify-content: space-between;
  height: 24px;
  padding: 0 8px 0 31px;
  text-align: left;
}
.actions .group {
  height: 25px;
  margin-top: 1px;
  padding: 0 7px;
  background: linear-gradient(#b9cfe8, #98b4d5);
}
.statusbar {
  display: flex;
  height: 23px;
  padding: 2px 1px 2px 0;
  border-top: 1px solid #8c8c8c;
  background: #f0edec;
}
.statusbar i {
  width: 86px;
  border-right: 1px solid #d4d0ce;
}
.statusbar i:first-child {
  flex: 1;
}
.statusbar i:nth-child(2) {
  width: 133px;
}

/* taskbar */
.taskbar {
  display: flex;
  align-items: center;
  height: 40px;
  border-top: 1px solid #14324e;
  background: radial-gradient(circle at -58px 222px, transparent 227px, rgba(170, 210, 248, .85) 233px, transparent 240px) 890px 0 / 120px 100% no-repeat, linear-gradient(90deg, #1e5f98, #2b82bc 10%, #3a9cd2 32%, #2980c6 50%, #1e68b6 75%, #1a5aa6 86%, #164580 90%, #143f78);
  box-shadow: inset 0 1px 0 #7fb2dc;
}
.start {
  margin-left: 8px;
}
.task {
  display: grid;
  place-items: center;
  width: 58px;
  height: 38px;
  margin-right: 4px;
}
.start + .task {
  margin-left: 14px;
}
.stacked {
  width: 54px;
  margin-right: 8px;
  border: 1px solid #b8d4e6;
  border-radius: 3px;
  background: linear-gradient(135deg, #a9c9dc, #5d9dbd 50%, #64a9bd);
  box-shadow: 2px 0 0 #2a6488, 4px 0 0 #6aa2c2;
}
.active {
  border: 1px solid #eef6fc;
  border-radius: 3px;
  background: linear-gradient(135deg, #dceaf3, #a9cde4 60%, #b8dcf0);
}
.ie {
  fill: #6ccbf5;
  font: bold italic 46px Lato, sans-serif;
}
.mi {
  width: 32px;
  height: 32px;
  background: #e64f1c;
  color: #fff;
  font: bold 18px/30px Inter, sans-serif;
  text-align: center;
}
.tray {
  display: flex;
  align-items: center;
  gap: 9px;
  height: 100%;
  margin-left: auto;
  color: #fff;
  font-size: 11px;
}
.lang {
  margin: 0 7px 4px 0;
}
.tray .up {
  margin-right: 3px;
}
.time {
  display: flex;
  flex-direction: column;
  align-items: center;
  margin-left: 2px;
  line-height: 17px;
}
.peek {
  width: 14px;
  height: 100%;
  margin-left: -3px;
  border: 1px solid #0d2a4c;
  background: linear-gradient(135deg, #6289b4, #1b4a80 50%);
}
```
